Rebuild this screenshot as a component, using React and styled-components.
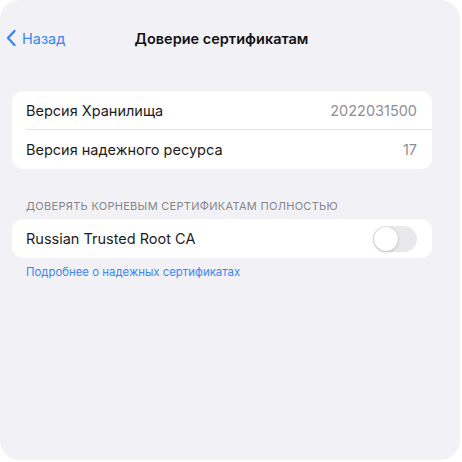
import styled, { createGlobalStyle } from 'styled-components';

const GlobalStyle = createGlobalStyle`
  html, body {
    margin: 0;
    padding: 0;
    background: #ffffff;
  }
  body {
    font-family: "Inter", "Roboto", "Liberation Sans", sans-serif;
    -webkit-font-smoothing: antialiased;
  }
`

const Screen = styled.div`
  width: 460px;
  height: 460px;
  background: #f2f2f6;
  border-radius: 20px;
  overflow: hidden;
  display: flex;
  flex-direction: column;
`

const NavBar = styled.div`
  position: relative;
  height: 38px;
  margin-top: 19px;
  display: flex;
  align-items: center;
  justify-content: center;
`

const BackButton = styled.div`
  position: absolute;
  left: 5px;
  top: 0;
  bottom: 0;
  display: flex;
  align-items: center;
  gap: 5px;
  color: #3a86ef;
  font-size: 14.5px;
`

const Title = styled.div`
  margin-right: 17px;
  font-size: 14.5px;
  font-weight: 600;
  color: #111111;
`

const Content = styled.div`
  padding: 34px 28px 0 12px;
  display: flex;
  flex-direction: column;
`

const Card = styled.div`
  background: #ffffff;
  border-radius: 11px;
  padding-left: 14px;
  margin-top: ${p => p.$top || 0}px;
`

const Row = styled.div`
  height: ${p => p.$h || 38}px;
  display: flex;
  align-items: center;
  justify-content: space-between;
  padding-right: 15px;
  border-bottom: ${p => (p.$divider ? '1px solid #e4e4e8' : 'none')};
  font-size: 14.5px;
  color: #1c1c1e;
`

const Value = styled.span`
  color: #8e8e93;
`

const SectionHeader = styled.div`
  margin-top: 30px;
  padding-left: 14px;
  font-size: 11px;
  color: #85858b;
  letter-spacing: 0.3px;
`

const Toggle = styled.div`
  width: 44px;
  height: 26px;
  border-radius: 13px;
  background: #e9e9eb;
  position: relative;
`

const Knob = styled.div`
  position: absolute;
  left: 1px;
  top: 1px;
  width: 24px;
  height: 24px;
  border-radius: 50%;
  background: #ffffff;
  box-shadow: 0 1px 3px rgba(0, 0, 0, 0.2), 0 0 0 0.5px rgba(0, 0, 0, 0.06);
`

const FooterLink = styled.div`
  margin-top: 7px;
  padding-left: 14px;
  font-size: 11.4px;
  color: #3a86ef;
`

function App() {
  return (
    <>
      <GlobalStyle />
      <Screen>
        <NavBar>
          <BackButton>
            <svg width="12" height="18" viewBox="0 0 12 18">
              <path d="M9.5 2 L3 9 L9.5 16" fill="none" stroke="#3a86ef" strokeWidth="2.4" strokeLinecap="round" strokeLinejoin="round" />
            </svg>
            Назад
          </BackButton>
          <Title>Доверие сертификатам</Title>
        </NavBar>
        <Content>
          <Card>
            <Row $divider>
              Версия Хранилища
              <Value>2022031500</Value>
            </Row>
            <Row $h={39}>
              Версия надежного ресурса
              <Value>17</Value>
            </Row>
          </Card>
          <SectionHeader>ДОВЕРЯТЬ КОРНЕВЫМ СЕРТИФИКАТАМ ПОЛНОСТЬЮ</SectionHeader>
          <Card $top={6}>
            <Row $h={39}>
              Russian Trusted Root CA
              <Toggle>
                <Knob />
              </Toggle>
            </Row>
          </Card>
          <FooterLink>Подробнее о надежных сертификатах</FooterLink>
        </Content>
      </Screen>
    </>
  );
}

export default App;
